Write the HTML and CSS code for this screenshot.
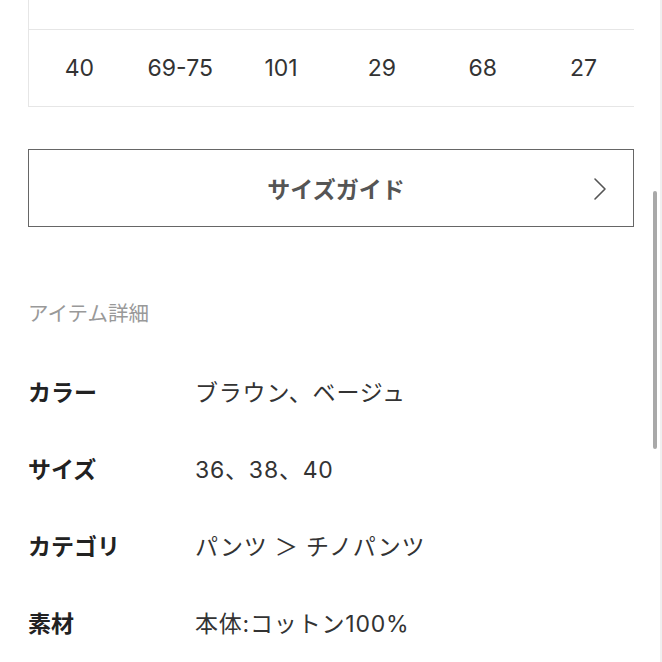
FILE: index.html
```html
<!DOCTYPE html>
<html lang="ja">
<head>
<meta charset="utf-8">
<link rel="stylesheet" href="styles.css">
</head>
<body>
<div class="page">
  <div class="size-table">
    <div class="row head">
      <div class="cell"></div><div class="cell"></div><div class="cell"></div>
      <div class="cell"></div><div class="cell"></div><div class="cell"></div>
    </div>
    <div class="row">
      <div class="cell">40</div><div class="cell">69-75</div><div class="cell">101</div>
      <div class="cell">29</div><div class="cell">68</div><div class="cell">27</div>
    </div>
  </div>

  <a class="guide-btn" href="#">
    <span class="guide-label">サイズガイド</span>
    <svg class="chev" width="14" height="24" viewBox="0 0 14 24"><path d="M2 2 L12 12 L2 22" fill="none" stroke="#555" stroke-width="1.6" stroke-linecap="round" stroke-linejoin="round"/></svg>
  </a>

  <h2 class="section-title">アイテム詳細</h2>

  <dl class="details">
    <dt>カラー</dt><dd>ブラウン、ベージュ</dd>
    <dt>サイズ</dt><dd>36、38、40</dd>
    <dt>カテゴリ</dt><dd>パンツ ＞ チノパンツ</dd>
    <dt>素材</dt><dd>本体:コットン100%</dd>
  </dl>
</div>
<div class="scrollbar"></div>
<div class="edge"></div>
</body>
</html>
```

FILE: styles.css
```css
html, body {
  margin: 0;
  padding: 0;
  background: #fff;
  overflow: hidden;
}
body {
  font-family: "Inter", "Noto Sans CJK JP", sans-serif;
  color: #333;
}
.page {
  padding: 0 28px;
}
.size-table {
  margin-top: -47px;
  border-left: 1px solid #e6e6e6;
}
.row {
  display: grid;
  grid-template-columns: repeat(6, 1fr);
  height: 76px;
  border-bottom: 1.5px solid #e6e6e6;
}
.cell {
  display: flex;
  align-items: center;
  justify-content: center;
  font-size: 23px;
  color: #333;
  padding-bottom: 1px;
}
.guide-btn {
  margin-top: 42px;
  height: 76px;
  border: 1.5px solid #666;
  display: flex;
  align-items: center;
  justify-content: center;
  position: relative;
  text-decoration: none;
  padding-left: 10px;
}
.guide-label {
  font-size: 23px;
  font-weight: bold;
  color: #555;
}
.chev {
  position: absolute;
  right: 26px;
  top: 27px;
}
.section-title {
  margin: 72px 0 0;
  font-size: 20.5px;
  line-height: 30px;
  font-weight: normal;
  color: #999;
}
.details {
  margin: 23px 0 0;
  display: grid;
  grid-template-columns: 167px 1fr;
  grid-auto-rows: 77px;
  align-items: center;
}
.details dt {
  font-size: 23px;
  font-weight: bold;
  color: #222;
}
.details dd {
  margin: 0;
  font-size: 23px;
  color: #333;
  letter-spacing: 0.8px;
}
.scrollbar {
  position: fixed;
  left: 653px;
  top: 191px;
  width: 4px;
  height: 258px;
  background: #a9a9a9;
  border-radius: 2px;
}
.edge {
  position: fixed;
  right: 0;
  top: 0;
  width: 2px;
  height: 100%;
  background: #f0f0f0;
}
```
